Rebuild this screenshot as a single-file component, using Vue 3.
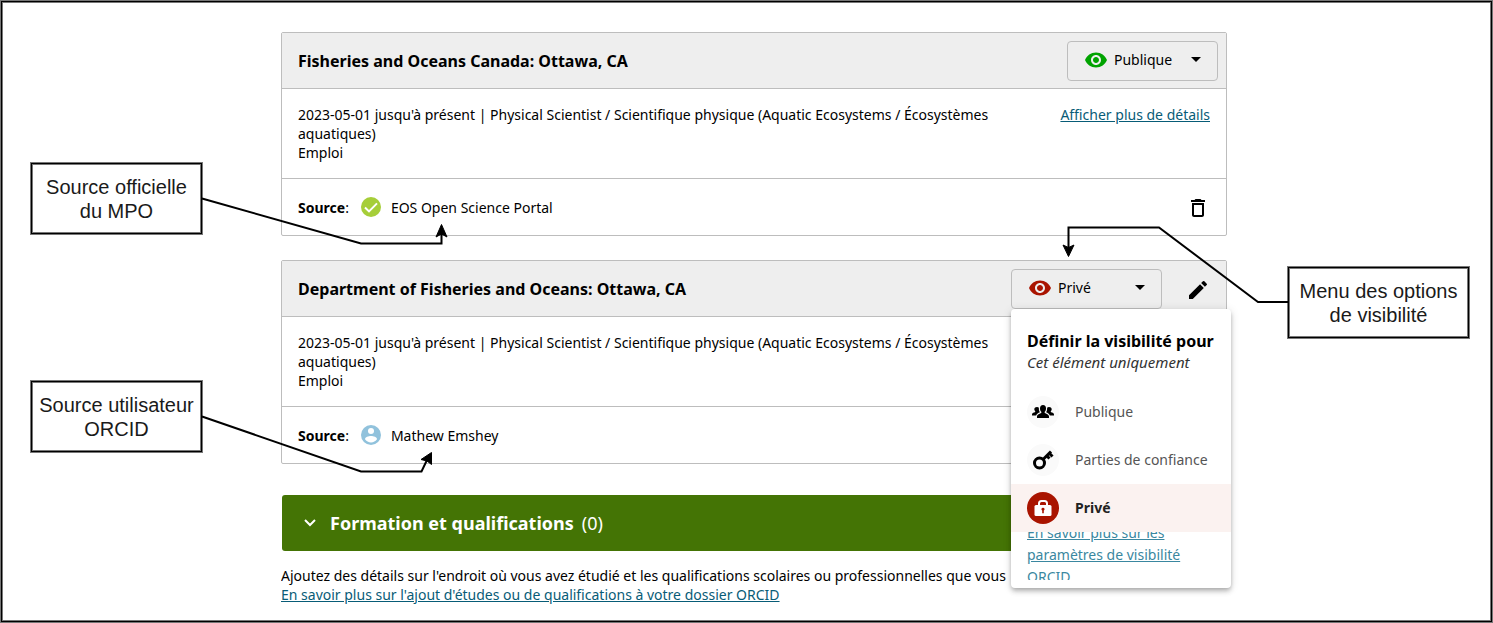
<script setup>
const cards = [
  {
    id: 'fisheries',
    title: 'Fisheries and Oceans Canada: Ottawa, CA',
    visibility: 'Publique',
    tone: 'public',
    source: 'EOS Open Science Portal',
    verified: true,
  },
  {
    id: 'department',
    title: 'Department of Fisheries and Oceans: Ottawa, CA',
    visibility: 'Privé',
    tone: 'private',
    source: 'Mathew Emshey',
    verified: false,
  },
]
</script>

<template>
  <div class="frame">
    <aside class="side side-left">
      <p class="callout">Source officielle<br />du MPO</p>
      <p class="callout">Source utilisateur<br />ORCID</p>
    </aside>

    <main class="content">
      <article v-for="card in cards" :key="card.id" class="card">
        <header class="card-head">
          <h2>{{ card.title }}</h2>
          <div class="visibility">
            <button type="button" class="visibility-btn" :aria-expanded="!card.verified" aria-haspopup="menu">
              <svg class="eye" :class="card.tone" viewBox="1 4 22 16" aria-hidden="true">
                <path d="M12 4.5C7 4.5 2.73 7.61 1 12c1.73 4.39 6 7.5 11 7.5s9.27-3.11 11-7.5c-1.73-4.39-6-7.5-11-7.5zM12 17c-2.76 0-5-2.24-5-5s2.24-5 5-5 5 2.24 5 5-2.24 5-5 5zm0-8c-1.66 0-3 1.34-3 3s1.34 3 3 3 3-1.34 3-3-1.34-3-3-3z" />
              </svg>
              <span class="visibility-label">{{ card.visibility }}</span>
              <svg class="caret" viewBox="0 0 10 5" aria-hidden="true"><path d="M0 0h10L5 5z" /></svg>
            </button>

            <div v-if="!card.verified" class="menu" role="menu">
              <div class="menu-head">
                <h3>Définir la visibilité pour</h3>
                <p>Cet élément uniquement</p>
              </div>
              <button type="button" class="option" role="menuitem">
                <span class="disc">
                  <svg viewBox="0 0 22 14" width="22" height="14" aria-hidden="true">
                    <path d="M11 0c2 0 3 1.500 3 3.500 0 1.400-.5 2.600-1.300 3.300v1.100c1.600.7 4.300 1.500 4.300 3.600V13H5v-1.500c0-2.100 2.700-2.900 4.300-3.600V6.800C8.500 6.100 8 4.900 8 3.500 8 1.500 9 0 11 0z" />
                    <path d="M5 2c.7 0 1.400.2 1.900.7-.2 1.800.2 3.300 1 4.500C6.300 8 4.600 8.800 4.100 10.500H0V9.400c0-1.400 2-1.900 3.200-2.400V6.200C2.500 5.600 2.300 4.900 2.300 4.200 2.300 2.900 3.600 2 5 2z" />
                    <path d="M17 2c-.7 0-1.400.2-1.900.7.2 1.800-.2 3.300-1 4.500 1.600.8 3.300 1.600 3.800 3.300H22V9.400c0-1.400-2-1.900-3.200-2.400V6.200c.7-.6.9-1.300.9-2C19.700 2.900 18.400 2 17 2z" />
                  </svg>
                </span>
                Publique
              </button>
              <button type="button" class="option" role="menuitem">
                <span class="disc">
                  <svg viewBox="0 0 22 20" width="22" height="20" fill="none" stroke="#000" aria-hidden="true">
                    <circle cx="7.500" cy="13" r="5" stroke-width="3" />
                    <path d="M11 9.500 19 1.500" stroke-width="3" />
                    <path d="M14.500 5.500 17.500 8.500M17 3 20.500 6.500" stroke-width="3" />
                  </svg>
                </span>
                Parties de confiance
              </button>
              <button type="button" class="option selected" role="menuitem">
                <span class="disc">
                  <svg viewBox="0 0 18 18" width="18" height="18" aria-hidden="true">
                    <path fill="none" stroke="#fff" stroke-width="2" d="M5 8V4.500C5 3 6 2 7.500 2h3C12 2 13 3 13 4.500V8" />
                    <rect x="0.500" y="6" width="17" height="11" rx="1.500" fill="#fff" />
                    <path fill="#a91400" d="M9 8.700a1.500 1.500 0 0 1 .8 2.800v2.700H8.200v-2.700A1.500 1.500 0 0 1 9 8.700z" />
                  </svg>
                </span>
                Privé
              </button>
              <a class="menu-link" href="#visibilite">En savoir plus sur les paramètres de visibilité ORCID</a>
            </div>
          </div>
          <button v-if="!card.verified" type="button" class="icon-btn" aria-label="Modifier">
            <svg viewBox="0 0 24 24" width="24" height="24" aria-hidden="true">
              <path d="M3 17.250V21h3.750L17.810 9.940l-3.750-3.750L3 17.250zM20.710 7.040a1 1 0 0 0 0-1.410l-2.340-2.340a1 1 0 0 0-1.410 0l-1.830 1.830 3.750 3.750 1.830-1.830z" />
            </svg>
          </button>
        </header>

        <div class="card-body">
          <p class="details">
            2023-05-01 jusqu'à présent | Physical Scientist / Scientifique physique (Aquatic Ecosystems / Écosystèmes aquatiques)<br />Emploi
          </p>
          <a class="link" href="#details">Afficher plus de détails</a>
        </div>

        <footer class="card-foot">
          <span class="source"><strong>Source</strong>:</span>
          <svg v-if="card.verified" class="badge" viewBox="0 0 20 20" aria-hidden="true">
            <circle cx="10" cy="10" r="10" fill="#a6ce39" />
            <path d="M4 10.500 8 14.400 16 6.400" fill="none" stroke="#fff" stroke-width="2" />
          </svg>
          <svg v-else class="badge" viewBox="0 0 20 20" aria-hidden="true">
            <circle cx="10" cy="10" r="10" fill="#91c2dc" />
            <circle cx="10" cy="6" r="3" fill="#fff" />
            <path d="M10 11c-2.500 0-6 1.200-6 3.200a7.200 7.200 0 0 0 12 0c0-2-3.500-3.200-6-3.200z" fill="#fff" />
          </svg>
          <span class="source-name">{{ card.source }}</span>
          <button v-if="card.verified" type="button" class="icon-btn" aria-label="Supprimer">
            <svg viewBox="0 0 24 24" width="24" height="24" aria-hidden="true">
              <path d="M6 19c0 1.100.9 2 2 2h8c1.100 0 2-.9 2-2V7H6v12zM8 9h8v10H8V9zm7.500-5-1-1h-5l-1 1H5v2h14V4h-3.500z" />
            </svg>
          </button>
        </footer>
      </article>

      <section>
        <h2 class="section-bar">
          <button type="button" class="section-toggle">
            <svg viewBox="0 0 12 8" width="12" height="8" fill="none" stroke="#fff" stroke-width="2" aria-hidden="true">
              <path d="m1 1 5 5 5-5" />
            </svg>
            <span>Formation et qualifications</span>
            <span class="count">(0)</span>
          </button>
        </h2>
        <p class="section-text">
          Ajoutez des détails sur l'endroit où vous avez étudié et les qualifications scolaires ou professionnelles que vous
        </p>
        <a class="link" href="#etudes">En savoir plus sur l'ajout d'études ou de qualifications à votre dossier ORCID</a>
      </section>
    </main>

    <aside class="side side-right">
      <p class="callout">Menu des options<br />de visibilité</p>
    </aside>

    <svg class="arrows arrows-left" width="460" height="500" viewBox="0 0 460 500" aria-hidden="true">
      <path d="M202 198.500 361 243.500H441.500V234" />
      <path class="tip" d="M441.500 224.500 447 237 441.500 234 436 237z" />
      <path d="M202 416.500 361 471.500H421.500L427 460" />
      <path class="tip" d="M431.500 452.500 431.500 464.500 427 461 421 459.500z" />
    </svg>
    <svg class="arrows arrows-right" width="440" height="310" viewBox="1053 0 440 310" aria-hidden="true">
      <path d="M1288 302H1258L1159 227.500H1068.500V248" />
      <path class="tip" d="M1068.500 256.500 1063 245 1068.500 247.500 1074 245z" />
    </svg>
  </div>
</template>

<style>
body {
  margin: 0;
  background: #fff;
}
</style>

<style scoped>
* {
  box-sizing: border-box;
}

.frame {
  position: relative;
  display: grid;
  grid-template-columns: 251px minmax(0, 1fr) 243px;
  min-height: 100vh;
  padding: 32px 23px 17px 30px;
  color: #000;
  font: 14px/19px "Noto Sans", sans-serif;
  overflow: hidden;
}

.frame::after {
  content: "";
  position: absolute;
  inset: 1px;
  border: 1px solid #000;
  box-shadow: 0 0 0 1px #777, inset 0 0 0 1px #777;
  pointer-events: none;
}

h2,
h3,
p {
  margin: 0;
}

button {
  margin: 0;
  padding: 0;
  border: 0;
  background: none;
  color: inherit;
  font: inherit;
  cursor: pointer;
}

svg {
  display: block;
  flex: none;
}

/* Annotations */
.side {
  display: flex;
  flex-direction: column;
}

.side-left {
  gap: 147px;
  padding-top: 131px;
  align-items: flex-start;
}

.side-right {
  padding-top: 235px;
  align-items: flex-end;
}

.callout {
  width: 171px;
  margin: 0 1px;
  padding: 11px 0 10px;
  border: 1px solid #000;
  box-shadow: 0 0 0 1px #777, inset 0 0 0 1px #777;
  color: #1a1a1a;
  font: 20px/24px "Liberation Sans", Arial, sans-serif;
  text-align: center;
  white-space: nowrap;
}

.side-right .callout {
  width: 181px;
}

.arrows {
  position: absolute;
  top: 0;
  fill: none;
  stroke: #000;
  stroke-width: 2;
  pointer-events: none;
}

.arrows-left {
  left: 0;
}

.arrows-right {
  right: 0;
}

.tip {
  fill: #000;
  stroke-width: 1;
}

/* Cards */
.card {
  margin-bottom: 24px;
  border: 1px solid #bdbdbd;
  border-radius: 2px;
}

.card-head {
  display: flex;
  align-items: center;
  height: 56px;
  padding: 0 8px 0 16px;
  border-bottom: 1px solid #bdbdbd;
  background: #eee;
}

.card-head h2 {
  flex: 1;
  font-size: 16px;
  line-height: 24px;
}

.visibility {
  position: relative;
}

.visibility-btn {
  display: flex;
  align-items: center;
  width: 151px;
  height: 40px;
  padding: 0 16px 2px 17px;
  border: 1px solid #bdbdbd;
  border-radius: 4px;
}

.eye {
  width: 22px;
  height: 16px;
}

.eye.public {
  fill: #00a300;
}

.eye.private {
  fill: #a91400;
}

.visibility-label {
  flex: 1;
  margin-left: 7px;
  text-align: left;
}

.caret {
  width: 10px;
  height: 5px;
}

.icon-btn {
  display: flex;
  align-items: center;
  justify-content: center;
  width: 40px;
  height: 40px;
  padding-top: 2px;
}

.card-head .icon-btn {
  margin-left: 16px;
}

.card-body {
  display: flex;
  justify-content: space-between;
  gap: 32px;
  padding: 16px;
}

.details {
  flex: 1;
}

.link {
  color: #085c77;
  white-space: nowrap;
}

.card-foot {
  display: flex;
  align-items: center;
  height: 57px;
  padding: 0 8px 0 16px;
  border-top: 1px solid #bdbdbd;
}

.badge {
  width: 20px;
  height: 20px;
  margin: 0 10px 0 12px;
}

.source-name {
  flex: 1;
}

/* Visibility menu */
.menu {
  position: absolute;
  z-index: 2;
  top: 100%;
  left: 0;
  width: 220px;
  padding: 16px 0 8px;
  border-radius: 4px;
  background: #fff;
  box-shadow: 0 2px 4px -1px rgba(0, 0, 0, 0.2), 0 4px 5px rgba(0, 0, 0, 0.14), 0 1px 10px rgba(0, 0, 0, 0.12);
}

.menu-head {
  height: 63px;
  padding: 4px 16px 0;
  white-space: nowrap;
}

.menu-head h3 {
  font-size: 16px;
  line-height: 24px;
}

.menu-head p {
  color: #333;
  font-size: 15px;
  font-style: italic;
}

.option {
  display: flex;
  align-items: center;
  gap: 16px;
  width: 100%;
  height: 48px;
  padding: 0 16px;
  color: #555;
}

.disc {
  display: flex;
  align-items: center;
  justify-content: center;
  width: 32px;
  height: 32px;
  border-radius: 50%;
  background: #fafafa;
}

.selected {
  background: #fbf2f0;
  color: #222;
  font-weight: 700;
}

.selected .disc {
  background: #a91400;
}

.menu-link {
  display: flex;
  align-items: center;
  height: 48px;
  padding: 0 16px 2px;
  overflow: hidden;
  color: #3a87a0;
  line-height: 22px;
}

/* Collapsible section */
.section-bar {
  margin: 31px 0 15px 1px;
  border-radius: 3px;
  background: #447405;
  color: #fff;
  font-size: 18px;
  line-height: 24px;
}

.section-toggle {
  display: flex;
  align-items: center;
  width: 100%;
  height: 56px;
  padding: 0 22px;
}

.section-toggle span {
  margin-left: 14px;
}

.section-toggle .count {
  margin-left: 8px;
  font-weight: 400;
}

.section-text {
  overflow: hidden;
  white-space: nowrap;
}
</style>
